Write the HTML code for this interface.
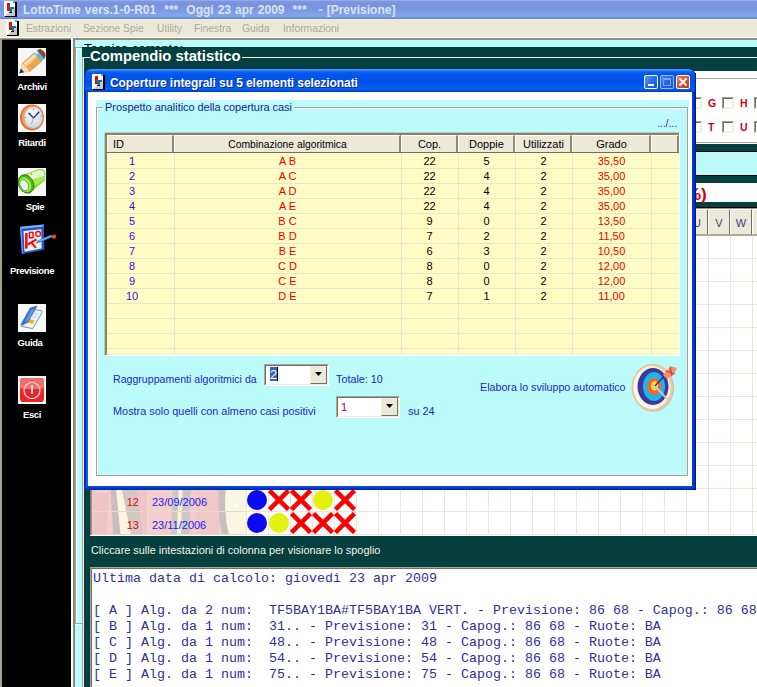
<!DOCTYPE html>
<html><head><meta charset="utf-8">
<style>
*{margin:0;padding:0;box-sizing:border-box}
html,body{width:757px;height:687px;overflow:hidden;background:#ece9d8;font-family:"Liberation Sans",sans-serif;font-size:11px}
.a{position:absolute}
.t{position:absolute;white-space:pre;line-height:1}
.mi{position:absolute;top:23px;color:#aca899;font-size:10.3px;white-space:pre;line-height:12px}
.sl{position:absolute;color:#fff;font-size:9.5px;font-weight:bold;white-space:pre;line-height:12px;letter-spacing:-0.4px}
.ico{position:absolute;left:18px;width:28px;height:28px;background:#f8f8f8}
</style></head><body>
<div class="a" style="left:0;top:0;width:757px;height:687px;overflow:hidden">

<!-- ===== title bar ===== -->
<div class="a" style="left:0;top:0;width:757px;height:19px;background:linear-gradient(#a8bcf0 0,#7e98e0 1px,#7893de 4px,#7a98e0 10px,#80a6e8 15px,#7ea0e6 17px,#6c88d8 18px,#6c88d8 19px)"></div>
<div class="a" style="left:4px;top:1px;width:16px;height:16px">
 <svg width="16" height="16" viewBox="0 0 16 16"><rect x="0" y="0" width="11" height="15" fill="#fff"/><path d="M1 15 L11 6 L11 15Z" fill="#c8c8c8"/><rect x="11" y="1" width="2" height="16" fill="#000"/><rect x="1" y="15" width="12" height="2" fill="#000"/><rect x="9" y="0" width="2" height="2" fill="#20c0c0"/><rect x="3" y="2" width="3" height="8" fill="#f00"/><rect x="6" y="7" width="2" height="3" fill="#f00"/><rect x="4" y="6" width="6" height="2" fill="#008080"/><rect x="6" y="8" width="2" height="3" fill="#008080"/><rect x="5" y="11" width="3" height="1" fill="#000080"/></svg>
</div>
<div class="t" style="left:23px;top:4px;font-size:12px;font-weight:bold;color:#dae3f7;word-spacing:0.7px">LottoTime vers.1-0-R01  ***  Oggi 23 apr 2009  ***   - [Previsione]</div>

<!-- ===== menu bar ===== -->
<div class="a" style="left:0;top:19px;width:757px;height:18px;background:#ece9d8"></div>
<div class="a" style="left:6px;top:20px;width:16px;height:16px">
 <svg width="16" height="16" viewBox="0 0 16 16"><rect x="0" y="0" width="11" height="15" fill="#fff"/><path d="M1 15 L11 6 L11 15Z" fill="#c8c8c8"/><rect x="11" y="1" width="2" height="16" fill="#000"/><rect x="1" y="15" width="12" height="2" fill="#000"/><rect x="9" y="0" width="2" height="2" fill="#20c0c0"/><rect x="3" y="2" width="3" height="8" fill="#f00"/><rect x="6" y="7" width="2" height="3" fill="#f00"/><rect x="4" y="6" width="6" height="2" fill="#008080"/><rect x="6" y="8" width="2" height="3" fill="#008080"/><rect x="5" y="11" width="3" height="1" fill="#000080"/></svg>
</div>
<div class="mi" style="left:26px">Estrazioni</div>
<div class="mi" style="left:83px">Sezione Spie</div>
<div class="mi" style="left:157px">Utility</div>
<div class="mi" style="left:194px">Finestra</div>
<div class="mi" style="left:242px">Guida</div>
<div class="mi" style="left:283px">Informazioni</div>
<div class="a" style="left:0;top:37px;width:757px;height:1px;background:#fff"></div>

<!-- ===== sidebar ===== -->
<div class="a" style="left:0;top:38px;width:71px;height:649px;background:#a4a090"></div>
<div class="a" style="left:2px;top:39px;width:69px;height:1px;background:#6a6858"></div>
<div class="a" style="left:2px;top:40px;width:69px;height:647px;background:#000"></div>

<div class="ico" style="top:48px"><svg width="28" height="28" viewBox="0 0 28 28">
<path d="M4.7 14.9 L16.1 5.2 L23.3 13.6 L11.9 23.3Z" fill="#f2a448" stroke="#e0862a" stroke-width="0.7"/>
<path d="M5.5 15.5 L16.6 6 L19.2 9 L8.2 18.6Z" fill="#fde6c4"/>
<path d="M7 17.5 L18 8 L18.6 8.7 L7.6 18.2Z" fill="#f0b470"/>
<path d="M4.7 14.9 L11.9 23.3 L1.5 25Z" fill="#f8dcbc" stroke="#e8a060" stroke-width="0.5"/>
<path d="M1.3 25.2 L2.9 20.6 L6.1 24.2Z" fill="#1c2c70"/>
<path d="M16.1 5.2 L19.1 2.6 L26.3 11 L23.3 13.6Z" fill="#5ab8ec"/>
<path d="M16.8 4.6 L19.1 2.6 L21 4.8 L18.7 6.8Z" fill="#c8ecfc"/>
<path d="M19.1 2.6 L20.8 1.2 Q23 0.6 25.5 3 L27.2 5.2 Q28.2 7.6 26.3 11Z" fill="#8a4a2a"/>
</svg></div>
<div class="ico" style="top:104px"><svg width="28" height="28" viewBox="0 0 28 28">
<defs><radialGradient id="cf" cx="0.45" cy="0.35" r="0.7"><stop offset="0" stop-color="#ffffff"/><stop offset="1" stop-color="#b8d8f0"/></radialGradient></defs>
<ellipse cx="14" cy="13.5" rx="12" ry="13" fill="#e8702c"/>
<ellipse cx="14.6" cy="13.3" rx="10.6" ry="11.6" fill="#f4a070"/>
<ellipse cx="15.3" cy="13.5" rx="8.9" ry="10.5" fill="url(#cf)"/>
<path d="M11 9.2 L15.5 14 L20.8 8.2" stroke="#2a3890" stroke-width="1.5" fill="none" stroke-linecap="round"/>
<path d="M15.5 14 L13.4 20.5" stroke="#f09060" stroke-width="0.9"/>
<circle cx="15.5" cy="14" r="0.9" fill="#e86020"/>
<rect x="15" y="4.5" width="1" height="1.5" fill="#e86020"/><rect x="6.5" y="13" width="1.2" height="1" fill="#e86020"/><rect x="22.6" y="11.5" width="1.2" height="1" fill="#e86020"/>
</svg></div>
<div class="ico" style="top:168px"><svg width="28" height="28" viewBox="0 0 28 28">
<path d="M6 6.5 L21 1 Q26.5 0.5 27.3 5 L27 11.5 Q26.5 13 25.5 13.5 L14 23 Z" fill="#8ada2c"/>
<path d="M10 6 L21.5 2 Q25 1.8 26 4.5 L26.5 8 L13 12Z" fill="#e6fad0"/>
<path d="M12 13 L26.6 8.5 L26.3 11.5 L14 19Z" fill="#a6ec50"/>
<ellipse cx="8" cy="16" rx="7.4" ry="9.6" transform="rotate(-28 8 16)" fill="#4cb818" stroke="#1e7a0e" stroke-width="0.8"/>
<ellipse cx="7.2" cy="16.6" rx="5.6" ry="7.6" transform="rotate(-28 7.2 16.6)" fill="#a4ee4c"/>
<ellipse cx="6.2" cy="17.2" rx="3.9" ry="5.9" transform="rotate(-28 6.2 17.2)" fill="#eef2ee" stroke="#3a9a1c" stroke-width="0.7"/>
<circle cx="13.3" cy="6" r="1" fill="#c8b020"/>
</svg></div>
<div class="a" style="left:18px;top:224px;width:40px;height:32px"><svg width="40" height="32" viewBox="0 0 40 32">
<path d="M2 2.7 L25.8 0.4 L26.4 25.8 L3.9 30.2Z" fill="#2058c0"/>
<path d="M2 2.7 L25.8 0.4 L25.6 2.5 L3.6 5Z" fill="#7ab0f0"/>
<path d="M2 2.7 L3.6 5 L5 29 L3.9 30.2Z" fill="#6aa0e8"/>
<path d="M5.5 7.1 L23.3 5.2 L23.6 24.5 L6.5 27.7Z" fill="#e6f2fc"/>
<path d="M7.1 9 L9.6 9 L9.6 24.5 L7.1 24.8Z" fill="#f00"/>
<path d="M9.6 20.7 L18.5 15.3 M13.1 18.2 L17.9 23.9" stroke="#f00" stroke-width="2"/>
<path d="M11.5 8.4 L15 8.4 L15 13.8 L11.5 13.8Z" fill="none" stroke="#f00" stroke-width="1.4"/>
<circle cx="20.1" cy="9.9" r="2.4" fill="#fff" stroke="#f00" stroke-width="1.3"/>
<path d="M20 17.8 L34 11.9" stroke="#3a80e0" stroke-width="2.6"/>
<path d="M21 17 L33 12" stroke="#a8d0f8" stroke-width="0.8"/>
<path d="M20 17.8 L18.5 18.8" stroke="#806040" stroke-width="1.6"/>
<circle cx="36" cy="12.6" r="2.2" fill="#e84818"/>
</svg></div>
<div class="ico" style="top:304px"><svg width="28" height="28" viewBox="0 0 28 28">
<path d="M12.4 5.2 L23 6.6 Q24.8 7 24 8.6 L14.6 24.6 L3.8 22.4Z" fill="#f2f5fa" stroke="#5a82d4" stroke-width="0.9"/>
<path d="M16 9 L21 9.8 M15 11 L20 11.8 M14 13 L19 13.8" stroke="#c8d0d8" stroke-width="0.8"/>
<path d="M11.5 15.2 L16.6 16.2 L14.8 19.9 L9.9 18.7Z" fill="#f0b400"/>
<path d="M2 21.4 L12 3.8 L19.4 1.5 L17.6 5.5 L10.1 18.5 L5 21Z" fill="#3c6cd8"/>
<path d="M7 18 L13 6 L17 4.5 L11 16Z" fill="#6a94e4"/>
</svg></div>
<div class="ico" style="top:376px"><svg width="28" height="28" viewBox="0 0 28 28"><rect x="2" y="2" width="24" height="24" rx="3" fill="#e82828"/><rect x="2" y="2" width="24" height="11" rx="3" fill="#f07070"/><circle cx="14" cy="14.5" r="8" fill="none" stroke="#f8e0e0" stroke-width="1.2"/><rect x="13.3" y="9" width="1.5" height="9" fill="#fff"/></svg></div>
<div class="sl" style="left:-8px;top:81px;width:80px;text-align:center">Archivi</div>
<div class="sl" style="left:-8px;top:137px;width:80px;text-align:center">Ritardi</div>
<div class="sl" style="left:-5px;top:201px;width:80px;text-align:center">Spie</div>
<div class="sl" style="left:-8px;top:265px;width:80px;text-align:center">Previsione</div>
<div class="sl" style="left:-10px;top:337px;width:80px;text-align:center">Guida</div>
<div class="sl" style="left:-8px;top:409px;width:80px;text-align:center">Esci</div>
<!-- ===== workspace frame ===== -->
<div class="a" style="left:71px;top:37px;width:686px;height:650px;background:#fcfcfa"></div>
<div class="a" style="left:73px;top:38px;width:684px;height:649px;background:#8f8b7b"></div>
<div class="a" style="left:75px;top:40px;width:682px;height:647px;background:#bbfbfb"></div>
<!-- inner sunken frame -->
<div class="a" style="left:75px;top:47px;width:682px;height:576px;background:#a8a494"></div>
<div class="a" style="left:76px;top:48px;width:681px;height:575px;background:#fff"></div>
<div class="a" style="left:77px;top:49px;width:680px;height:574px;background:#bbfbfb"></div>
<div class="a" style="left:75px;top:623px;width:682px;height:1px;background:#a8a494"></div>
<div class="a" style="left:75px;top:624px;width:682px;height:1px;background:#fff"></div>
<!-- Tecnica corrente text (clipped) -->
<div class="a" style="left:75px;top:40px;width:682px;height:7px;overflow:hidden">
 <div class="t" style="left:9px;top:2px;font-size:13px;color:#000">Tecnica corrente:</div>
</div>
<!-- teal panel -->
<div class="a" style="left:82px;top:47px;width:675px;height:640px;background:#053f3f"></div>
<!-- groupbox lines -->
<div class="a" style="left:82px;top:57px;width:1px;height:630px;background:#a8a494"></div>
<div class="a" style="left:83px;top:57px;width:1px;height:630px;background:#f4f2ea"></div>
<div class="a" style="left:83px;top:57px;width:7px;height:1px;background:#f4f2ea"></div>
<div class="a" style="left:242px;top:57px;width:515px;height:1px;background:#f4f2ea"></div>
<div class="t" style="left:90px;top:49px;font-size:14.8px;font-weight:bold;color:#fff">Compendio statistico</div>

<!-- ===== right strip panels (behind dialog) ===== -->
<div class="a" style="left:100px;top:71px;width:657px;height:73px;background:#fff"></div>
<div class="a" style="left:90px;top:78px;width:667px;height:1px;background:#aca899"></div>
<div class="a" style="left:84px;top:142px;width:673px;height:1px;background:#aca899"></div>
<div class="a" style="left:84px;top:151px;width:673px;height:1px;background:#000"></div>
<div class="a" style="left:84px;top:152px;width:673px;height:23px;background:#bbfbfb"></div>
<div class="a" style="left:84px;top:175px;width:673px;height:1px;background:#000"></div>
<div class="a" style="left:84px;top:183px;width:673px;height:19px;background:#fff"></div>
<div class="t" style="left:686px;top:186px;font-size:17px;font-weight:bold;color:#d00000">%)</div>
<div class="a" style="left:84px;top:207px;width:673px;height:1px;background:#000"></div>

<div class="a" style="left:690px;top:97px;width:12px;height:12px;background:#fff;border-top:1px solid #a09c8c;border-left:1px solid #a09c8c;border-right:1px solid #f1efe2;border-bottom:1px solid #f1efe2"></div>
<div class="a" style="left:691px;top:98px;width:10px;height:10px;border-top:1px solid #716f64;border-left:1px solid #716f64;border-right:1px solid #f1efe2;border-bottom:1px solid #f1efe2"></div>
<div class="t" style="left:708px;top:98px;font-size:10.5px;font-weight:bold;color:#c8001e">G</div>
<div class="a" style="left:722px;top:97px;width:12px;height:12px;background:#fff;border-top:1px solid #a09c8c;border-left:1px solid #a09c8c;border-right:1px solid #f1efe2;border-bottom:1px solid #f1efe2"></div>
<div class="a" style="left:723px;top:98px;width:10px;height:10px;border-top:1px solid #716f64;border-left:1px solid #716f64;border-right:1px solid #f1efe2;border-bottom:1px solid #f1efe2"></div>
<div class="t" style="left:740px;top:98px;font-size:10.5px;font-weight:bold;color:#c8001e">H</div>
<div class="a" style="left:754px;top:97px;width:12px;height:12px;background:#fff;border-top:1px solid #a09c8c;border-left:1px solid #a09c8c;border-right:1px solid #f1efe2;border-bottom:1px solid #f1efe2"></div>
<div class="a" style="left:755px;top:98px;width:10px;height:10px;border-top:1px solid #716f64;border-left:1px solid #716f64;border-right:1px solid #f1efe2;border-bottom:1px solid #f1efe2"></div>
<div class="t" style="left:772px;top:98px;font-size:10.5px;font-weight:bold;color:#c8001e">I</div>
<div class="a" style="left:690px;top:121px;width:12px;height:12px;background:#fff;border-top:1px solid #a09c8c;border-left:1px solid #a09c8c;border-right:1px solid #f1efe2;border-bottom:1px solid #f1efe2"></div>
<div class="a" style="left:691px;top:122px;width:10px;height:10px;border-top:1px solid #716f64;border-left:1px solid #716f64;border-right:1px solid #f1efe2;border-bottom:1px solid #f1efe2"></div>
<div class="t" style="left:708px;top:122px;font-size:10.5px;font-weight:bold;color:#c8001e">T</div>
<div class="a" style="left:722px;top:121px;width:12px;height:12px;background:#fff;border-top:1px solid #a09c8c;border-left:1px solid #a09c8c;border-right:1px solid #f1efe2;border-bottom:1px solid #f1efe2"></div>
<div class="a" style="left:723px;top:122px;width:10px;height:10px;border-top:1px solid #716f64;border-left:1px solid #716f64;border-right:1px solid #f1efe2;border-bottom:1px solid #f1efe2"></div>
<div class="t" style="left:740px;top:122px;font-size:10.5px;font-weight:bold;color:#c8001e">U</div>
<div class="a" style="left:754px;top:121px;width:12px;height:12px;background:#fff;border-top:1px solid #a09c8c;border-left:1px solid #a09c8c;border-right:1px solid #f1efe2;border-bottom:1px solid #f1efe2"></div>
<div class="a" style="left:755px;top:122px;width:10px;height:10px;border-top:1px solid #716f64;border-left:1px solid #716f64;border-right:1px solid #f1efe2;border-bottom:1px solid #f1efe2"></div>
<div class="t" style="left:772px;top:122px;font-size:10.5px;font-weight:bold;color:#c8001e">V</div>

<div class="a" style="left:90px;top:207px;width:667px;height:329px;background:#7a7868"></div>
<div class="a" style="left:91px;top:208px;width:666px;height:327px;background:#9c988a"></div>
<div class="a" style="left:84px;top:207px;width:673px;height:1px;background:#000"></div>
<div class="a" style="left:90px;top:535px;width:667px;height:1px;background:#fff"></div>
<div class="a" style="left:92px;top:209px;width:665px;height:326px;background:#fff"></div>
<div class="a" style="left:92px;top:209px;width:665px;height:27px;background:#aca899"></div>
<div class="a" style="left:246px;top:209px;width:22px;height:26px;background:#ece9d8;border-left:1px solid #fff;border-top:1px solid #fff;border-right:1px solid #716f64;border-bottom:1px solid #aca899"></div>
<div class="t" style="left:246px;top:218px;width:22px;text-align:center;font-size:11px;color:#34408a">A</div>
<div class="a" style="left:268px;top:209px;width:22px;height:26px;background:#ece9d8;border-left:1px solid #fff;border-top:1px solid #fff;border-right:1px solid #716f64;border-bottom:1px solid #aca899"></div>
<div class="t" style="left:268px;top:218px;width:22px;text-align:center;font-size:11px;color:#34408a">B</div>
<div class="a" style="left:290px;top:209px;width:22px;height:26px;background:#ece9d8;border-left:1px solid #fff;border-top:1px solid #fff;border-right:1px solid #716f64;border-bottom:1px solid #aca899"></div>
<div class="t" style="left:290px;top:218px;width:22px;text-align:center;font-size:11px;color:#34408a">C</div>
<div class="a" style="left:312px;top:209px;width:22px;height:26px;background:#ece9d8;border-left:1px solid #fff;border-top:1px solid #fff;border-right:1px solid #716f64;border-bottom:1px solid #aca899"></div>
<div class="t" style="left:312px;top:218px;width:22px;text-align:center;font-size:11px;color:#34408a">D</div>
<div class="a" style="left:334px;top:209px;width:22px;height:26px;background:#ece9d8;border-left:1px solid #fff;border-top:1px solid #fff;border-right:1px solid #716f64;border-bottom:1px solid #aca899"></div>
<div class="t" style="left:334px;top:218px;width:22px;text-align:center;font-size:11px;color:#34408a">E</div>
<div class="a" style="left:356px;top:209px;width:22px;height:26px;background:#ece9d8;border-left:1px solid #fff;border-top:1px solid #fff;border-right:1px solid #716f64;border-bottom:1px solid #aca899"></div>
<div class="t" style="left:356px;top:218px;width:22px;text-align:center;font-size:11px;color:#34408a">F</div>
<div class="a" style="left:378px;top:209px;width:22px;height:26px;background:#ece9d8;border-left:1px solid #fff;border-top:1px solid #fff;border-right:1px solid #716f64;border-bottom:1px solid #aca899"></div>
<div class="t" style="left:378px;top:218px;width:22px;text-align:center;font-size:11px;color:#34408a">G</div>
<div class="a" style="left:400px;top:209px;width:22px;height:26px;background:#ece9d8;border-left:1px solid #fff;border-top:1px solid #fff;border-right:1px solid #716f64;border-bottom:1px solid #aca899"></div>
<div class="t" style="left:400px;top:218px;width:22px;text-align:center;font-size:11px;color:#34408a">H</div>
<div class="a" style="left:422px;top:209px;width:22px;height:26px;background:#ece9d8;border-left:1px solid #fff;border-top:1px solid #fff;border-right:1px solid #716f64;border-bottom:1px solid #aca899"></div>
<div class="t" style="left:422px;top:218px;width:22px;text-align:center;font-size:11px;color:#34408a">I</div>
<div class="a" style="left:444px;top:209px;width:22px;height:26px;background:#ece9d8;border-left:1px solid #fff;border-top:1px solid #fff;border-right:1px solid #716f64;border-bottom:1px solid #aca899"></div>
<div class="t" style="left:444px;top:218px;width:22px;text-align:center;font-size:11px;color:#34408a">J</div>
<div class="a" style="left:466px;top:209px;width:22px;height:26px;background:#ece9d8;border-left:1px solid #fff;border-top:1px solid #fff;border-right:1px solid #716f64;border-bottom:1px solid #aca899"></div>
<div class="t" style="left:466px;top:218px;width:22px;text-align:center;font-size:11px;color:#34408a">K</div>
<div class="a" style="left:488px;top:209px;width:22px;height:26px;background:#ece9d8;border-left:1px solid #fff;border-top:1px solid #fff;border-right:1px solid #716f64;border-bottom:1px solid #aca899"></div>
<div class="t" style="left:488px;top:218px;width:22px;text-align:center;font-size:11px;color:#34408a">L</div>
<div class="a" style="left:510px;top:209px;width:22px;height:26px;background:#ece9d8;border-left:1px solid #fff;border-top:1px solid #fff;border-right:1px solid #716f64;border-bottom:1px solid #aca899"></div>
<div class="t" style="left:510px;top:218px;width:22px;text-align:center;font-size:11px;color:#34408a">M</div>
<div class="a" style="left:532px;top:209px;width:22px;height:26px;background:#ece9d8;border-left:1px solid #fff;border-top:1px solid #fff;border-right:1px solid #716f64;border-bottom:1px solid #aca899"></div>
<div class="t" style="left:532px;top:218px;width:22px;text-align:center;font-size:11px;color:#34408a">N</div>
<div class="a" style="left:554px;top:209px;width:22px;height:26px;background:#ece9d8;border-left:1px solid #fff;border-top:1px solid #fff;border-right:1px solid #716f64;border-bottom:1px solid #aca899"></div>
<div class="t" style="left:554px;top:218px;width:22px;text-align:center;font-size:11px;color:#34408a">O</div>
<div class="a" style="left:576px;top:209px;width:22px;height:26px;background:#ece9d8;border-left:1px solid #fff;border-top:1px solid #fff;border-right:1px solid #716f64;border-bottom:1px solid #aca899"></div>
<div class="t" style="left:576px;top:218px;width:22px;text-align:center;font-size:11px;color:#34408a">P</div>
<div class="a" style="left:598px;top:209px;width:22px;height:26px;background:#ece9d8;border-left:1px solid #fff;border-top:1px solid #fff;border-right:1px solid #716f64;border-bottom:1px solid #aca899"></div>
<div class="t" style="left:598px;top:218px;width:22px;text-align:center;font-size:11px;color:#34408a">Q</div>
<div class="a" style="left:620px;top:209px;width:22px;height:26px;background:#ece9d8;border-left:1px solid #fff;border-top:1px solid #fff;border-right:1px solid #716f64;border-bottom:1px solid #aca899"></div>
<div class="t" style="left:620px;top:218px;width:22px;text-align:center;font-size:11px;color:#34408a">R</div>
<div class="a" style="left:642px;top:209px;width:22px;height:26px;background:#ece9d8;border-left:1px solid #fff;border-top:1px solid #fff;border-right:1px solid #716f64;border-bottom:1px solid #aca899"></div>
<div class="t" style="left:642px;top:218px;width:22px;text-align:center;font-size:11px;color:#34408a">S</div>
<div class="a" style="left:664px;top:209px;width:22px;height:26px;background:#ece9d8;border-left:1px solid #fff;border-top:1px solid #fff;border-right:1px solid #716f64;border-bottom:1px solid #aca899"></div>
<div class="t" style="left:664px;top:218px;width:22px;text-align:center;font-size:11px;color:#34408a">T</div>
<div class="a" style="left:686px;top:209px;width:22px;height:26px;background:#ece9d8;border-left:1px solid #fff;border-top:1px solid #fff;border-right:1px solid #716f64;border-bottom:1px solid #aca899"></div>
<div class="t" style="left:686px;top:218px;width:22px;text-align:center;font-size:11px;color:#34408a">U</div>
<div class="a" style="left:708px;top:209px;width:22px;height:26px;background:#ece9d8;border-left:1px solid #fff;border-top:1px solid #fff;border-right:1px solid #716f64;border-bottom:1px solid #aca899"></div>
<div class="t" style="left:708px;top:218px;width:22px;text-align:center;font-size:11px;color:#34408a">V</div>
<div class="a" style="left:730px;top:209px;width:22px;height:26px;background:#ece9d8;border-left:1px solid #fff;border-top:1px solid #fff;border-right:1px solid #716f64;border-bottom:1px solid #aca899"></div>
<div class="t" style="left:730px;top:218px;width:22px;text-align:center;font-size:11px;color:#34408a">W</div>
<div class="a" style="left:246px;top:236px;width:1px;height:299px;background:#ece6d6"></div>
<div class="a" style="left:268px;top:236px;width:1px;height:299px;background:#ece6d6"></div>
<div class="a" style="left:290px;top:236px;width:1px;height:299px;background:#ece6d6"></div>
<div class="a" style="left:312px;top:236px;width:1px;height:299px;background:#ece6d6"></div>
<div class="a" style="left:334px;top:236px;width:1px;height:299px;background:#ece6d6"></div>
<div class="a" style="left:356px;top:236px;width:1px;height:299px;background:#ece6d6"></div>
<div class="a" style="left:378px;top:236px;width:1px;height:299px;background:#ece6d6"></div>
<div class="a" style="left:400px;top:236px;width:1px;height:299px;background:#ece6d6"></div>
<div class="a" style="left:422px;top:236px;width:1px;height:299px;background:#ece6d6"></div>
<div class="a" style="left:444px;top:236px;width:1px;height:299px;background:#ece6d6"></div>
<div class="a" style="left:466px;top:236px;width:1px;height:299px;background:#ece6d6"></div>
<div class="a" style="left:488px;top:236px;width:1px;height:299px;background:#ece6d6"></div>
<div class="a" style="left:510px;top:236px;width:1px;height:299px;background:#ece6d6"></div>
<div class="a" style="left:532px;top:236px;width:1px;height:299px;background:#ece6d6"></div>
<div class="a" style="left:554px;top:236px;width:1px;height:299px;background:#ece6d6"></div>
<div class="a" style="left:576px;top:236px;width:1px;height:299px;background:#ece6d6"></div>
<div class="a" style="left:598px;top:236px;width:1px;height:299px;background:#ece6d6"></div>
<div class="a" style="left:620px;top:236px;width:1px;height:299px;background:#ece6d6"></div>
<div class="a" style="left:642px;top:236px;width:1px;height:299px;background:#ece6d6"></div>
<div class="a" style="left:664px;top:236px;width:1px;height:299px;background:#ece6d6"></div>
<div class="a" style="left:686px;top:236px;width:1px;height:299px;background:#ece6d6"></div>
<div class="a" style="left:708px;top:236px;width:1px;height:299px;background:#ece6d6"></div>
<div class="a" style="left:730px;top:236px;width:1px;height:299px;background:#ece6d6"></div>
<div class="a" style="left:752px;top:236px;width:1px;height:299px;background:#ece6d6"></div>
<div class="a" style="left:92px;top:258px;width:665px;height:1px;background:#f0e2dc"></div>
<div class="a" style="left:92px;top:281px;width:665px;height:1px;background:#f0e2dc"></div>
<div class="a" style="left:92px;top:304px;width:665px;height:1px;background:#f0e2dc"></div>
<div class="a" style="left:92px;top:327px;width:665px;height:1px;background:#f0e2dc"></div>
<div class="a" style="left:92px;top:350px;width:665px;height:1px;background:#f0e2dc"></div>
<div class="a" style="left:92px;top:373px;width:665px;height:1px;background:#f0e2dc"></div>
<div class="a" style="left:92px;top:396px;width:665px;height:1px;background:#f0e2dc"></div>
<div class="a" style="left:92px;top:419px;width:665px;height:1px;background:#f0e2dc"></div>
<div class="a" style="left:92px;top:442px;width:665px;height:1px;background:#f0e2dc"></div>
<div class="a" style="left:92px;top:465px;width:665px;height:1px;background:#f0e2dc"></div>
<div class="a" style="left:92px;top:488px;width:665px;height:1px;background:#f0e2dc"></div>
<div class="a" style="left:92px;top:511px;width:665px;height:1px;background:#f0e2dc"></div>
<div class="a" style="left:92px;top:534px;width:665px;height:1px;background:#f0e2dc"></div>
<div class="a" style="left:752px;top:209px;width:22px;height:26px;background:#ece9d8;border-left:1px solid #fff;border-top:1px solid #fff;border-right:1px solid #716f64;border-bottom:1px solid #aca899"></div>
<div class="t" style="left:752px;top:218px;width:22px;text-align:center;font-size:11px;color:#34408a">X</div>
<svg class="a" style="left:92px;top:236px" width="154" height="299" viewBox="0 0 154 299">
<rect width="154" height="299" fill="#f4cdcd"/>
<path d="M0 252 Q10 262 18 254 L14 299 L0 299Z" fill="#f0c4c4"/>
<polygon points="18.6,252.0 24.0,252.0 28.6,299.0 21.0,299.0" fill="#c8bebe"/>
<polygon points="24.0,252.0 29.7,252.0 39.0,299.0 28.6,299.0" fill="#f8f6dc"/>
<polygon points="29.7,252.0 44.5,252.0 51.0,299.0 39.0,299.0" fill="#d2c8c6"/>
<polygon points="44.5,252.0 55.0,252.0 55.0,299.0 51.0,299.0" fill="#eec6c6"/>
<polygon points="81.0,252.0 99.0,252.0 97.0,299.0 79.0,299.0" fill="#cec6c2"/>
<polygon points="86.5,252.0 90.5,252.0 89.0,299.0 85.0,299.0" fill="#f4f2d8"/>
<polygon points="104.0,252.0 127.0,252.0 127.0,299.0 104.0,299.0" fill="#f0c8c8"/>
<path d="M127 252 L154 252 L154 299 L130 299 Q125 276 127 252Z" fill="#c8c0bc"/>
<path d="M134 252 L154 252 L154 299 L137 299 Q131 276 134 252Z" fill="#f8f8e2"/>
<ellipse cx="144" cy="269" rx="3" ry="2" fill="#ffffff" opacity="0.7"/>
</svg>
<div class="a" style="left:147px;top:236px;width:1px;height:299px;background:#eadcc8"></div>
<div class="a" style="left:92px;top:258px;width:154px;height:1px;background:#e8d8c4"></div>
<div class="a" style="left:92px;top:281px;width:154px;height:1px;background:#e8d8c4"></div>
<div class="a" style="left:92px;top:304px;width:154px;height:1px;background:#e8d8c4"></div>
<div class="a" style="left:92px;top:327px;width:154px;height:1px;background:#e8d8c4"></div>
<div class="a" style="left:92px;top:350px;width:154px;height:1px;background:#e8d8c4"></div>
<div class="a" style="left:92px;top:373px;width:154px;height:1px;background:#e8d8c4"></div>
<div class="a" style="left:92px;top:396px;width:154px;height:1px;background:#e8d8c4"></div>
<div class="a" style="left:92px;top:419px;width:154px;height:1px;background:#e8d8c4"></div>
<div class="a" style="left:92px;top:442px;width:154px;height:1px;background:#e8d8c4"></div>
<div class="a" style="left:92px;top:465px;width:154px;height:1px;background:#e8d8c4"></div>
<div class="a" style="left:92px;top:488px;width:154px;height:1px;background:#e8d8c4"></div>
<div class="a" style="left:92px;top:511px;width:154px;height:1px;background:#e8d8c4"></div>
<div class="a" style="left:92px;top:534px;width:154px;height:1px;background:#e8d8c4"></div>
<div class="t" style="left:92px;top:497px;width:47px;text-align:right;font-size:11px;color:#f00000">12</div>
<div class="t" style="left:152px;top:497px;font-size:11px;color:#2020f0">23/09/2006</div>
<div class="a" style="left:247px;top:490px;width:20px;height:20px;border-radius:50%;background:#0a0af5"></div>
<svg class="a" style="left:268px;top:489px" width="22" height="22" viewBox="0 0 22 22"><path d="M1.5 1.5 L20.5 20.5 M20.5 1.5 L1.5 20.5" stroke="#f00" stroke-width="4.6"/></svg>
<svg class="a" style="left:290px;top:489px" width="22" height="22" viewBox="0 0 22 22"><path d="M1.5 1.5 L20.5 20.5 M20.5 1.5 L1.5 20.5" stroke="#f00" stroke-width="4.6"/></svg>
<div class="a" style="left:313px;top:490px;width:20px;height:20px;border-radius:50%;background:#e4f012"></div>
<svg class="a" style="left:334px;top:489px" width="22" height="22" viewBox="0 0 22 22"><path d="M1.5 1.5 L20.5 20.5 M20.5 1.5 L1.5 20.5" stroke="#f00" stroke-width="4.6"/></svg>
<div class="t" style="left:92px;top:520px;width:47px;text-align:right;font-size:11px;color:#f00000">13</div>
<div class="t" style="left:152px;top:520px;font-size:11px;color:#2020f0">23/11/2006</div>
<div class="a" style="left:247px;top:513px;width:20px;height:20px;border-radius:50%;background:#0a0af5"></div>
<div class="a" style="left:269px;top:513px;width:20px;height:20px;border-radius:50%;background:#e4f012"></div>
<svg class="a" style="left:290px;top:512px" width="22" height="22" viewBox="0 0 22 22"><path d="M1.5 1.5 L20.5 20.5 M20.5 1.5 L1.5 20.5" stroke="#f00" stroke-width="4.6"/></svg>
<svg class="a" style="left:312px;top:512px" width="22" height="22" viewBox="0 0 22 22"><path d="M1.5 1.5 L20.5 20.5 M20.5 1.5 L1.5 20.5" stroke="#f00" stroke-width="4.6"/></svg>
<svg class="a" style="left:334px;top:512px" width="22" height="22" viewBox="0 0 22 22"><path d="M1.5 1.5 L20.5 20.5 M20.5 1.5 L1.5 20.5" stroke="#f00" stroke-width="4.6"/></svg>
<div class="t" style="left:91px;top:545px;font-size:10.9px;color:#f4f4ec">Cliccare sulle intestazioni di colonna per visionare lo spoglio</div>
<div class="a" style="left:90px;top:567px;width:667px;height:120px;background:#aca899"></div>
<div class="a" style="left:91px;top:568px;width:666px;height:119px;background:#716f64"></div>
<div class="a" style="left:92px;top:569px;width:665px;height:118px;background:#fff"></div>
<div class="a" style="left:93px;top:571px;font-family:'Liberation Mono',monospace;font-size:13.33px;line-height:16px;color:#30309a;white-space:pre">Ultima data di calcolo: giovedì 23 apr 2009

[ A ] Alg. da 2 num:  TF5BAY1BA#TF5BAY1BA VERT. - Previsione: 86 68 - Capog.: 86 68
[ B ] Alg. da 1 num:  31.. - Previsione: 31 - Capog.: 86 68 - Ruote: BA
[ C ] Alg. da 1 num:  48.. - Previsione: 48 - Capog.: 86 68 - Ruote: BA
[ D ] Alg. da 1 num:  54.. - Previsione: 54 - Capog.: 86 68 - Ruote: BA
[ E ] Alg. da 1 num:  75.. - Previsione: 75 - Capog.: 86 68 - Ruote: BA</div>

<!-- ===== dialog ===== -->
<div class="a" style="left:84px;top:69px;width:612px;height:421px;border-radius:7px 7px 0 0;background:#0831d9"></div>
<div class="a" style="left:85px;top:70px;width:610px;height:419px;border-radius:6px 6px 0 0;background:linear-gradient(90deg,#0014d8 0,#0020dc 1px,#1a6af4 1px,#0a54ea 3px,#0c5cf0 4px,#0c5cf0 606px,#0048e0 607px,#0030d0 609px,#0020b0 610px)"></div>
<div class="a" style="left:84px;top:486px;width:612px;height:4px;background:linear-gradient(#0a54e6,#003cc8 2px,#0020a0 4px)"></div>
<div class="a" style="left:85px;top:69px;width:610px;height:23px;border-radius:7px 7px 0 0;background:linear-gradient(#2a7cff 0,#4a9cff 1px,#1a6cf8 2px,#0458ec 4px,#0050e6 12px,#0458ee 18px,#0a62f6 20px,#0046c8 22px,#0040c0 23px)"></div>
<div class="a" style="left:84px;top:73px;width:1px;height:417px;background:#0030b8"></div>
<div class="a" style="left:695px;top:73px;width:1px;height:417px;background:#001c90"></div>
<div class="a" style="left:88px;top:92px;width:604px;height:394px;background:#fff"></div>
<div class="a" style="left:92px;top:74px;width:16px;height:16px"><svg width="16" height="16" viewBox="0 0 16 16"><rect x="0" y="0" width="11" height="15" fill="#fff"/><path d="M1 15 L11 6 L11 15Z" fill="#c8c8c8"/><rect x="11" y="1" width="2" height="16" fill="#000"/><rect x="1" y="15" width="12" height="2" fill="#000"/><rect x="9" y="0" width="2" height="2" fill="#20c0c0"/><rect x="3" y="2" width="3" height="8" fill="#f00"/><rect x="6" y="7" width="2" height="3" fill="#f00"/><rect x="4" y="6" width="6" height="2" fill="#008080"/><rect x="6" y="8" width="2" height="3" fill="#008080"/><rect x="5" y="11" width="3" height="1" fill="#000080"/></svg></div>
<div class="t" style="left:110px;top:77px;font-size:12px;font-weight:bold;color:#fff;letter-spacing:-0.08px;text-shadow:1px 1px 0 #0a2ca8">Coperture integrali su 5 elementi selezionati</div>
<div style="position:absolute;top:75px;width:14px;height:14px;border:1px solid #fff;border-radius:2px;left:644px;background:linear-gradient(135deg,#5c9cff,#2a6cf0 50%,#1650d8)"><div class="a" style="left:3px;top:8px;width:6px;height:2px;background:#fff"></div></div>
<div style="position:absolute;top:75px;width:14px;height:14px;border:1px solid #fff;border-radius:2px;left:660px;border-color:#9ab8f8;background:linear-gradient(135deg,#4a88f4,#2a64e0 50%,#1a50d0)"><div class="a" style="left:2px;top:2px;width:8px;height:8px;border:1px solid #7aa0f0;border-top-width:2px"></div></div>
<div style="position:absolute;top:75px;width:14px;height:14px;border:1px solid #fff;border-radius:2px;left:676px;background:linear-gradient(135deg,#f08060,#e05030 50%,#c83810)"><svg class="a" style="left:1px;top:1px" width="10" height="10" viewBox="0 0 10 10"><path d="M1.5 1.5 L8.5 8.5 M8.5 1.5 L1.5 8.5" stroke="#fff" stroke-width="2"/></svg></div>
<div class="a" style="left:96px;top:100px;width:593px;height:376px;background:#bbfbfb"></div>
<div class="a" style="left:97px;top:108px;width:592px;height:369px;border:1px solid #fff"></div>
<div class="a" style="left:96px;top:107px;width:592px;height:369px;border:1px solid #aca08e"></div>
<div class="t" style="left:103px;top:102px;padding:0 2px;background:#bbfbfb;font-size:11px;color:#20209a;letter-spacing:-0.05px">Prospetto analitico della copertura casi</div>
<div class="t" style="left:657px;top:118px;font-size:11px;color:#5a10d8;letter-spacing:-0.2px">.../...</div>
<div class="a" style="left:104px;top:132px;width:576px;height:224px;background:#fff;border-top:1px solid #d0c8b0;border-left:1px solid #d0c8b0"></div>
<div class="a" style="left:105px;top:133px;width:574px;height:222px;background:#f1efe2;border-top:2px solid #85826f;border-left:2px solid #85826f"></div>
<div class="a" style="left:107px;top:135px;width:572px;height:219px;background:#fffcc4"></div>
<div class="a" style="left:107px;top:135px;width:572px;height:18px;background:#aca899"></div>
<div class="a" style="left:107px;top:135px;width:67px;height:17px;background:#ece9d8;border-left:1px solid #fff;border-top:1px solid #fff;border-right:2px solid #8c897a"></div>
<div class="t" style="left:113px;top:139px;font-size:11px;color:#000">ID</div>
<div class="a" style="left:174px;top:135px;width:227px;height:17px;background:#ece9d8;border-left:1px solid #fff;border-top:1px solid #fff;border-right:2px solid #8c897a"></div>
<div class="t" style="left:174px;top:140px;width:227px;text-align:center;font-size:10.3px;color:#000">Combinazione algoritmica</div>
<div class="a" style="left:401px;top:135px;width:57px;height:17px;background:#ece9d8;border-left:1px solid #fff;border-top:1px solid #fff;border-right:2px solid #8c897a"></div>
<div class="t" style="left:401px;top:139px;width:57px;text-align:center;font-size:11px;color:#000">Cop.</div>
<div class="a" style="left:458px;top:135px;width:57px;height:17px;background:#ece9d8;border-left:1px solid #fff;border-top:1px solid #fff;border-right:2px solid #8c897a"></div>
<div class="t" style="left:458px;top:139px;width:57px;text-align:center;font-size:11px;color:#000">Doppie</div>
<div class="a" style="left:515px;top:135px;width:57px;height:17px;background:#ece9d8;border-left:1px solid #fff;border-top:1px solid #fff;border-right:2px solid #8c897a"></div>
<div class="t" style="left:515px;top:139px;width:57px;text-align:center;font-size:11px;color:#000">Utilizzati</div>
<div class="a" style="left:572px;top:135px;width:79px;height:17px;background:#ece9d8;border-left:1px solid #fff;border-top:1px solid #fff;border-right:2px solid #8c897a"></div>
<div class="t" style="left:572px;top:139px;width:79px;text-align:center;font-size:11px;color:#000">Grado</div>
<div class="a" style="left:651px;top:135px;width:28px;height:17px;background:#ece9d8;border-left:1px solid #fff;border-top:1px solid #fff;border-right:2px solid #8c897a"></div>
<div class="a" style="left:107px;top:152px;width:572px;height:1px;background:#716f64"></div>
<div class="a" style="left:174px;top:153px;width:1px;height:201px;background:#e9e5cf"></div>
<div class="a" style="left:401px;top:153px;width:1px;height:201px;background:#e9e5cf"></div>
<div class="a" style="left:458px;top:153px;width:1px;height:201px;background:#e9e5cf"></div>
<div class="a" style="left:515px;top:153px;width:1px;height:201px;background:#e9e5cf"></div>
<div class="a" style="left:572px;top:153px;width:1px;height:201px;background:#e9e5cf"></div>
<div class="a" style="left:651px;top:153px;width:1px;height:201px;background:#e9e5cf"></div>
<div class="a" style="left:107px;top:168px;width:572px;height:1px;background:#e9e5cf"></div>
<div class="a" style="left:107px;top:183px;width:572px;height:1px;background:#e9e5cf"></div>
<div class="a" style="left:107px;top:198px;width:572px;height:1px;background:#e9e5cf"></div>
<div class="a" style="left:107px;top:213px;width:572px;height:1px;background:#e9e5cf"></div>
<div class="a" style="left:107px;top:228px;width:572px;height:1px;background:#e9e5cf"></div>
<div class="a" style="left:107px;top:243px;width:572px;height:1px;background:#e9e5cf"></div>
<div class="a" style="left:107px;top:258px;width:572px;height:1px;background:#e9e5cf"></div>
<div class="a" style="left:107px;top:273px;width:572px;height:1px;background:#e9e5cf"></div>
<div class="a" style="left:107px;top:288px;width:572px;height:1px;background:#e9e5cf"></div>
<div class="a" style="left:107px;top:303px;width:572px;height:1px;background:#e9e5cf"></div>
<div class="a" style="left:107px;top:318px;width:572px;height:1px;background:#e9e5cf"></div>
<div class="a" style="left:107px;top:333px;width:572px;height:1px;background:#e9e5cf"></div>
<div class="a" style="left:107px;top:348px;width:572px;height:1px;background:#e9e5cf"></div>
<div class="t" style="left:107px;top:156px;width:50px;text-align:center;font-size:11px;color:#2a10e8">1</div>
<div class="t" style="left:174px;top:156px;width:227px;text-align:center;font-size:11px;color:#f00000">A B</div>
<div class="t" style="left:401px;top:156px;width:57px;text-align:center;font-size:11px;color:#000">22</div>
<div class="t" style="left:458px;top:156px;width:57px;text-align:center;font-size:11px;color:#000">5</div>
<div class="t" style="left:515px;top:156px;width:57px;text-align:center;font-size:11px;color:#000">2</div>
<div class="t" style="left:572px;top:156px;width:79px;text-align:center;font-size:11px;color:#f00000">35,50</div>
<div class="t" style="left:107px;top:171px;width:50px;text-align:center;font-size:11px;color:#2a10e8">2</div>
<div class="t" style="left:174px;top:171px;width:227px;text-align:center;font-size:11px;color:#f00000">A C</div>
<div class="t" style="left:401px;top:171px;width:57px;text-align:center;font-size:11px;color:#000">22</div>
<div class="t" style="left:458px;top:171px;width:57px;text-align:center;font-size:11px;color:#000">4</div>
<div class="t" style="left:515px;top:171px;width:57px;text-align:center;font-size:11px;color:#000">2</div>
<div class="t" style="left:572px;top:171px;width:79px;text-align:center;font-size:11px;color:#f00000">35,00</div>
<div class="t" style="left:107px;top:186px;width:50px;text-align:center;font-size:11px;color:#2a10e8">3</div>
<div class="t" style="left:174px;top:186px;width:227px;text-align:center;font-size:11px;color:#f00000">A D</div>
<div class="t" style="left:401px;top:186px;width:57px;text-align:center;font-size:11px;color:#000">22</div>
<div class="t" style="left:458px;top:186px;width:57px;text-align:center;font-size:11px;color:#000">4</div>
<div class="t" style="left:515px;top:186px;width:57px;text-align:center;font-size:11px;color:#000">2</div>
<div class="t" style="left:572px;top:186px;width:79px;text-align:center;font-size:11px;color:#f00000">35,00</div>
<div class="t" style="left:107px;top:201px;width:50px;text-align:center;font-size:11px;color:#2a10e8">4</div>
<div class="t" style="left:174px;top:201px;width:227px;text-align:center;font-size:11px;color:#f00000">A E</div>
<div class="t" style="left:401px;top:201px;width:57px;text-align:center;font-size:11px;color:#000">22</div>
<div class="t" style="left:458px;top:201px;width:57px;text-align:center;font-size:11px;color:#000">4</div>
<div class="t" style="left:515px;top:201px;width:57px;text-align:center;font-size:11px;color:#000">2</div>
<div class="t" style="left:572px;top:201px;width:79px;text-align:center;font-size:11px;color:#f00000">35,00</div>
<div class="t" style="left:107px;top:216px;width:50px;text-align:center;font-size:11px;color:#2a10e8">5</div>
<div class="t" style="left:174px;top:216px;width:227px;text-align:center;font-size:11px;color:#f00000">B C</div>
<div class="t" style="left:401px;top:216px;width:57px;text-align:center;font-size:11px;color:#000">9</div>
<div class="t" style="left:458px;top:216px;width:57px;text-align:center;font-size:11px;color:#000">0</div>
<div class="t" style="left:515px;top:216px;width:57px;text-align:center;font-size:11px;color:#000">2</div>
<div class="t" style="left:572px;top:216px;width:79px;text-align:center;font-size:11px;color:#f00000">13,50</div>
<div class="t" style="left:107px;top:231px;width:50px;text-align:center;font-size:11px;color:#2a10e8">6</div>
<div class="t" style="left:174px;top:231px;width:227px;text-align:center;font-size:11px;color:#f00000">B D</div>
<div class="t" style="left:401px;top:231px;width:57px;text-align:center;font-size:11px;color:#000">7</div>
<div class="t" style="left:458px;top:231px;width:57px;text-align:center;font-size:11px;color:#000">2</div>
<div class="t" style="left:515px;top:231px;width:57px;text-align:center;font-size:11px;color:#000">2</div>
<div class="t" style="left:572px;top:231px;width:79px;text-align:center;font-size:11px;color:#f00000">11,50</div>
<div class="t" style="left:107px;top:246px;width:50px;text-align:center;font-size:11px;color:#2a10e8">7</div>
<div class="t" style="left:174px;top:246px;width:227px;text-align:center;font-size:11px;color:#f00000">B E</div>
<div class="t" style="left:401px;top:246px;width:57px;text-align:center;font-size:11px;color:#000">6</div>
<div class="t" style="left:458px;top:246px;width:57px;text-align:center;font-size:11px;color:#000">3</div>
<div class="t" style="left:515px;top:246px;width:57px;text-align:center;font-size:11px;color:#000">2</div>
<div class="t" style="left:572px;top:246px;width:79px;text-align:center;font-size:11px;color:#f00000">10,50</div>
<div class="t" style="left:107px;top:261px;width:50px;text-align:center;font-size:11px;color:#2a10e8">8</div>
<div class="t" style="left:174px;top:261px;width:227px;text-align:center;font-size:11px;color:#f00000">C D</div>
<div class="t" style="left:401px;top:261px;width:57px;text-align:center;font-size:11px;color:#000">8</div>
<div class="t" style="left:458px;top:261px;width:57px;text-align:center;font-size:11px;color:#000">0</div>
<div class="t" style="left:515px;top:261px;width:57px;text-align:center;font-size:11px;color:#000">2</div>
<div class="t" style="left:572px;top:261px;width:79px;text-align:center;font-size:11px;color:#f00000">12,00</div>
<div class="t" style="left:107px;top:276px;width:50px;text-align:center;font-size:11px;color:#2a10e8">9</div>
<div class="t" style="left:174px;top:276px;width:227px;text-align:center;font-size:11px;color:#f00000">C E</div>
<div class="t" style="left:401px;top:276px;width:57px;text-align:center;font-size:11px;color:#000">8</div>
<div class="t" style="left:458px;top:276px;width:57px;text-align:center;font-size:11px;color:#000">0</div>
<div class="t" style="left:515px;top:276px;width:57px;text-align:center;font-size:11px;color:#000">2</div>
<div class="t" style="left:572px;top:276px;width:79px;text-align:center;font-size:11px;color:#f00000">12,00</div>
<div class="t" style="left:107px;top:291px;width:50px;text-align:center;font-size:11px;color:#2a10e8">10</div>
<div class="t" style="left:174px;top:291px;width:227px;text-align:center;font-size:11px;color:#f00000">D E</div>
<div class="t" style="left:401px;top:291px;width:57px;text-align:center;font-size:11px;color:#000">7</div>
<div class="t" style="left:458px;top:291px;width:57px;text-align:center;font-size:11px;color:#000">1</div>
<div class="t" style="left:515px;top:291px;width:57px;text-align:center;font-size:11px;color:#000">2</div>
<div class="t" style="left:572px;top:291px;width:79px;text-align:center;font-size:11px;color:#f00000">11,00</div>
<div class="t" style="left:113px;top:374px;font-size:10.6px;color:#2424c0">Raggruppamenti algoritmici da</div>
<div class="t" style="left:113px;top:406px;font-size:10.9px;color:#2424c0">Mostra solo quelli con almeno casi positivi</div>
<div class="t" style="left:336px;top:374px;font-size:10.8px;color:#2424c0">Totale: 10</div>
<div class="t" style="left:408px;top:406px;font-size:10.9px;color:#2424c0">su 24</div>
<div class="t" style="left:480px;top:382px;font-size:10.7px;color:#2424c0">Elabora lo sviluppo automatico</div>
<div class="a" style="left:264px;top:364px;width:65px;height:22px;background:#fff;border-top:1px solid #aca899;border-left:1px solid #aca899;border-right:1px solid #fff;border-bottom:1px solid #fff"></div>
<div class="a" style="left:265px;top:365px;width:63px;height:20px;background:#fff;border-top:1px solid #716f64;border-left:1px solid #716f64;border-right:1px solid #f1efe2;border-bottom:1px solid #f1efe2"></div>
<div class="a" style="left:310px;top:366px;width:17px;height:18px;background:#ece9d8;border-top:1px solid #f1efe2;border-left:1px solid #f1efe2;border-right:1px solid #716f64;border-bottom:1px solid #716f64"></div>
<svg class="a" style="left:315px;top:372px" width="8" height="5" viewBox="0 0 8 5"><path d="M0 0H7L3.5 4Z" fill="#000"/></svg>
<div class="a" style="left:270px;top:367px;width:8px;height:14px;background:#316ac5"></div>
<div class="a" style="left:277px;top:367px;width:1px;height:14px;background:#000"></div>
<div class="t" style="left:270px;top:368px;font-size:13px;color:#fff">2</div>
<div class="a" style="left:336px;top:396px;width:64px;height:22px;background:#fff;border-top:1px solid #aca899;border-left:1px solid #aca899;border-right:1px solid #fff;border-bottom:1px solid #fff"></div>
<div class="a" style="left:337px;top:397px;width:62px;height:20px;background:#fff;border-top:1px solid #716f64;border-left:1px solid #716f64;border-right:1px solid #f1efe2;border-bottom:1px solid #f1efe2"></div>
<div class="a" style="left:381px;top:398px;width:17px;height:18px;background:#ece9d8;border-top:1px solid #f1efe2;border-left:1px solid #f1efe2;border-right:1px solid #716f64;border-bottom:1px solid #716f64"></div>
<svg class="a" style="left:386px;top:404px" width="8" height="5" viewBox="0 0 8 5"><path d="M0 0H7L3.5 4Z" fill="#000"/></svg>
<div class="t" style="left:341px;top:402px;font-size:11px;color:#800080">1</div>
<svg class="a" style="left:630px;top:362px" width="50" height="52" viewBox="0 0 50 52">
<ellipse cx="23" cy="26" rx="21" ry="23.7" fill="#a89880" opacity="0.6"/>
<ellipse cx="22.5" cy="25.5" rx="21" ry="23.7" fill="#eac89a"/>
<ellipse cx="22" cy="25.5" rx="18.5" ry="21.5" fill="#fdf8f0"/>
<ellipse cx="23.5" cy="24.5" rx="16.5" ry="19.5" fill="#f0e0c8" opacity="0.5"/>
<ellipse cx="23" cy="24.5" rx="15.5" ry="18.5" fill="#3a3a9a"/>
<ellipse cx="24" cy="24.5" rx="11" ry="14.5" fill="#22b2ea"/>
<ellipse cx="24.3" cy="24.5" rx="7" ry="8.6" fill="#f06a2c"/>
<ellipse cx="24.5" cy="24" rx="3.5" ry="4.7" fill="#f4e040"/>
<path d="M25 24 L38 38" stroke="#d0d0d0" stroke-width="2.2" opacity="0.85"/>
<path d="M25 24 L36 12" stroke="#303080" stroke-width="1.3"/>
<path d="M33 13 L41 4 L47 6 L44 12 L37 17Z" fill="#f09070"/>
<path d="M36 9 L45 12 M40 5 L42 14" stroke="#e03a3a" stroke-width="1.3"/>
</svg>


</div>
</body></html>
